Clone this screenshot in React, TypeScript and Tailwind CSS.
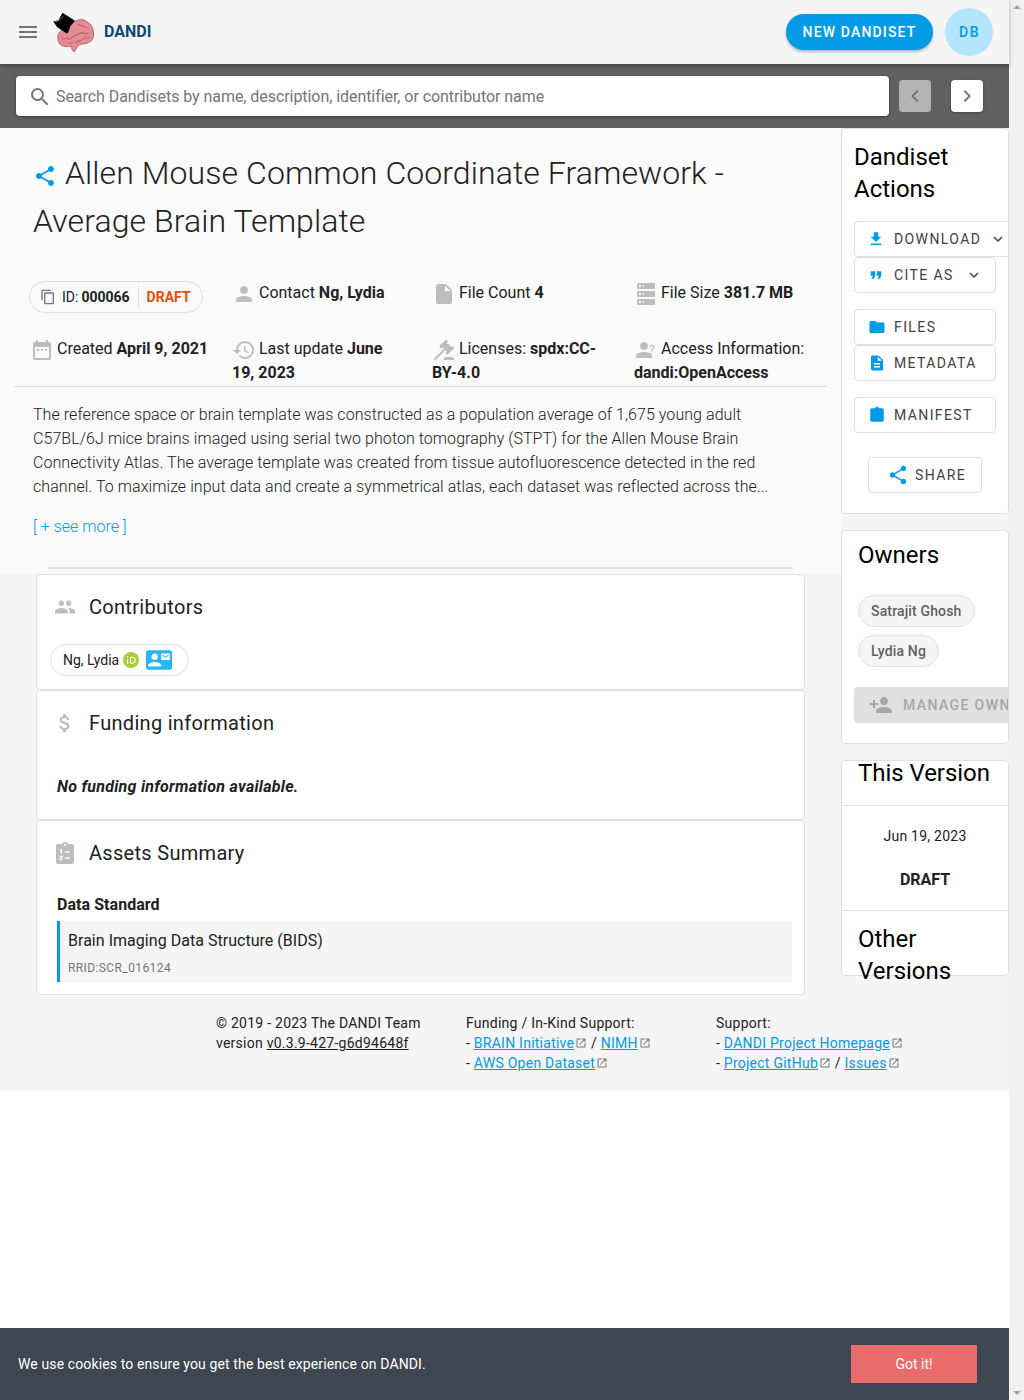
import React from "react";
import {
  MdMenu,
  MdSearch,
  MdChevronLeft,
  MdChevronRight,
  MdKeyboardArrowDown,
  MdFileDownload,
  MdFormatQuote,
  MdFolder,
  MdDescription,
  MdShare,
  MdPersonAdd,
  MdPerson,
  MdInsertDriveFile,
  MdDateRange,
  MdHistory,
  MdPeople,
  MdAttachMoney,
  MdContentCopy,
  MdContactMail,
  MdOpenInNew,
} from "react-icons/md";

const Logo = () => (
  <svg viewBox="50 10 50 45" width="50" height="45" className="shrink-0">
    {/* brain */}
    <path
      d="M72 24 C76 19 84 18 87 22 C92 24 94 30 93.5 35 C94 40 89 44 82 44 C78 45 76 48 74.500 52 C72 51 71.500 48 71 46 C64 48 58 45 58 39 C57 35 59 31 63 30 Z"
      fill="#e58b93"
      stroke="#a8565e"
      strokeWidth="0.8"
    />
    <path
      d="M62 39 C66 37 68 41 72 38 C74 34 78 36 80 33 C83 32 85 35 88 33 M75 43 C77 40 81 42 83 39 C85 37 88 39 90 37 M78 24 C81 27 84 25 87 28 M68 43 C70 42 71 44 73 43"
      fill="none"
      stroke="#a8565e"
      strokeWidth="0.9"
    />
    {/* top hat */}
    <polygon points="53.300,21.500 58.500,20 62.500,12.700 75,20.700 70.500,26 68,33 66.500,33.500 57,27" fill="#000" />
    <path d="M55 22 C58 21.500 61 19 63 16.500" fill="none" stroke="#ddd" strokeWidth="0.6" />
  </svg>
);

const AccessIcon = () => (
  <span className="relative inline-block w-[24px] h-[24px] -my-2 -mr-[1px]">
    <MdPerson size={24} className="text-[#bdbdbd] absolute left-[-2px] top-0" />
    <span className="absolute left-[15px] top-[2px] text-[12px] leading-[20px] text-[#bdbdbd]">?</span>
  </span>
);

const MdiIcon = ({ d, className = "" }: { d: string; className?: string }) => (
  <svg viewBox="0 0 24 24" width="24" height="24" className={className}>
    <path fill="currentColor" d={d} />
  </svg>
);

const SERVER =
  "M4,1H20A1,1 0 0,1 21,2V6A1,1 0 0,1 20,7H4A1,1 0 0,1 3,6V2A1,1 0 0,1 4,1M4,9H20A1,1 0 0,1 21,10V14A1,1 0 0,1 20,15H4A1,1 0 0,1 3,14V10A1,1 0 0,1 4,9M4,17H20A1,1 0 0,1 21,18V22A1,1 0 0,1 20,23H4A1,1 0 0,1 3,22V18A1,1 0 0,1 4,17M9,5H10V3H9V5M9,13H10V11H9V13M9,21H10V19H9V21M5,3V5H7V3H5M5,11V13H7V11H5M5,19V21H7V19H5Z";
const GAVEL =
  "M2.3,20.28L11.9,10.68L10.5,9.26L9.78,9.97C9.39,10.36 8.76,10.36 8.37,9.97L7.66,9.26C7.27,8.87 7.27,8.24 7.66,7.85L13.32,2.19C13.71,1.8 14.34,1.8 14.73,2.19L15.44,2.9C15.83,3.29 15.83,3.92 15.44,4.31L14.73,5L16.15,6.43C16.54,6.04 17.17,6.04 17.56,6.43C17.95,6.82 17.95,7.46 17.56,7.85L18.97,9.26L19.68,8.55C20.07,8.16 20.71,8.16 21.1,8.55L21.8,9.26C22.19,9.65 22.19,10.29 21.8,10.68L16.15,16.33C15.76,16.72 15.12,16.72 14.73,16.33L14.03,15.63C13.63,15.24 13.63,14.6 14.03,14.21L14.73,13.5L13.32,12.09L3.71,21.7C3.32,22.09 2.69,22.09 2.3,21.7C1.91,21.31 1.91,20.67 2.3,20.28M20,19A2,2 0 0,1 22,21V22H12V21A2,2 0 0,1 14,19H20Z";

const ClipboardSolid = () => (
  <svg viewBox="0 0 24 24" width="18" height="18" className="text-[#039be5]">
    <path
      fill="currentColor"
      d="M19,3H14.82C14.4,1.84 13.3,1 12,1C10.7,1 9.6,1.84 9.18,3H5A2,2 0 0,0 3,5V19A2,2 0 0,0 5,21H19A2,2 0 0,0 21,19V5A2,2 0 0,0 19,3Z"
    />
  </svg>
);

const ClipboardList = () => (
  <svg viewBox="0 0 24 24" width="24" height="24" className="text-[#bdbdbd]">
    <path
      fill="currentColor"
      d="M19 3h-4.2C14.4 1.8 13.3 1 12 1s-2.4.8-2.8 2H5c-1.1 0-2 .9-2 2v16c0 1.1.9 2 2 2h14c1.1 0 2-.9 2-2V5c0-1.1-.9-2-2-2zm-7 0c.6 0 1 .4 1 1s-.4 1-1 1-1-.4-1-1 .4-1 1-1z"
    />
    <path
      fill="none"
      stroke="#fafafa"
      strokeWidth="1.4"
      d="M7 9.500l1.300-.7v4M6.800 15.500h2.400l-2.300 3h2.600M12 11h5M12 17h5"
    />
  </svg>
);

const OrcidIcon = () => (
  <svg viewBox="0 0 16 16" width="16" height="16" className="shrink-0">
    <circle cx="8" cy="8" r="8" fill="#a6ce39" />
    <rect x="4" y="6.600" width="1.200" height="5.200" fill="#fff" />
    <circle cx="4.600" cy="4.700" r="0.800" fill="#fff" />
    <path
      d="M7 4.800h2.400c2 0 3.200 1.400 3.200 3.500s-1.300 3.500-3.200 3.500H7z M8.100 5.800v5h1.300c1.400 0 2.100-1.100 2.100-2.500s-.7-2.500-2.100-2.500z"
      fill="#fff"
      fillRule="evenodd"
    />
  </svg>
);

const Ext = () => <MdOpenInNew size={12} className="inline-block text-[#757575] ml-[1px] -my-1 align-[3px]" />;

const MetaText = ({ children, className = "pr-[8px]" }: { children: React.ReactNode; className?: string }) => (
  <p className={`pt-[1px] text-[16px] leading-[24px] text-[#212121] ${className}`}>{children}</p>
);

const icon = "inline-block -my-2 -mr-[1px] text-[#bdbdbd]";

const ActionButton = ({
  ico,
  label,
  caretClass,
  className = "",
}: {
  ico: React.ReactNode;
  label: string;
  caretClass?: string;
  className?: string;
}) => (
  <div
    className={`h-[36px] flex items-center border border-[#e0e0e0] rounded-[4px] bg-white text-[14px] tracking-[1.4px] text-[#424242] pl-[13px] ${className}`}
  >
    <span className="w-[26px] shrink-0 flex">{ico}</span>
    <span className="whitespace-nowrap">{label}</span>
    {caretClass && <MdKeyboardArrowDown size={18} className={`shrink-0 text-[#424242] ${caretClass}`} />}
  </div>
);

const SectionCard = ({
  ico,
  title,
  className,
  children,
}: {
  ico: React.ReactNode;
  title: string;
  className: string;
  children: React.ReactNode;
}) => (
  <section className={`bg-white border border-[#e0e0e0] rounded-[4px] ${className}`}>
    <div className="flex items-center h-[64px] pl-[16px]">
      <span className="w-[36px] shrink-0 flex">{ico}</span>
      <h2 className="text-[20px] leading-[32px] tracking-[0.3px] text-[#212121]">{title}</h2>
    </div>
    {children}
  </section>
);

export default function App() {
  return (
    <div className="flex h-[1400px] overflow-hidden bg-white [font-family:Roboto,sans-serif] relative">
      <div className="w-[1009px] shrink-0 flex flex-col">
        {/* App bar */}
        <header className="h-[64px] bg-[#f5f5f5] flex items-center pl-[16px] pr-[16px] relative z-10 shadow-[0_2px_4px_rgba(0,0,0,0.3)]">
          <MdMenu size={24} className="text-[#757575]" />
          <div className="ml-[10px] flex items-center">
            <Logo />
            <span className="ml-[4px] text-[16px] font-bold text-[#0b4a72]">DANDI</span>
          </div>
          <button className="ml-auto h-[36px] w-[147px] rounded-full bg-[#039be5] text-white text-[14px] font-medium tracking-[1.15px] shadow-[0_2px_3px_rgba(0,0,0,0.25)]">
            NEW DANDISET
          </button>
          <div className="ml-[12px] w-[48px] h-[48px] pl-[1px] rounded-full bg-[#b3e5fc] text-[#039be5] text-[14px] font-medium tracking-[0.1em] flex items-center justify-center">
            DB
          </div>
        </header>

        {/* Search bar */}
        <div className="h-[64px] bg-[#616161] flex items-center pl-[16px]">
          <div className="w-[873px] h-[40px] bg-white rounded-[4px] flex items-center pl-[12px] pt-[1px] shadow-[0_1px_3px_rgba(0,0,0,0.4)]">
            <MdSearch size={24} className="text-[#757575]" />
            <span className="ml-[4px] text-[16px] tracking-[-0.06px] text-[#757575]">
              Search Dandisets by name, description, identifier, or contributor name
            </span>
          </div>
          <div className="ml-[10px] w-[32px] h-[32px] rounded-[4px] bg-[#b4b4b4] flex items-center justify-center">
            <MdChevronLeft size={24} className="text-[#757575]" />
          </div>
          <div className="ml-[20px] w-[32px] h-[32px] rounded-[4px] bg-white flex items-center justify-center shadow-[0_1px_3px_rgba(0,0,0,0.3)]">
            <MdChevronRight size={24} className="text-[#757575]" />
          </div>
        </div>

        {/* Body */}
        <div className="flex bg-[#f5f5f5] h-[867px]">
          <div className="w-[841px] shrink-0 flex flex-col">
            <div className="h-[446px] bg-[#fafafa] rounded-t-[4px] flex flex-col">
              <h1 className="ml-[33px] mt-[21px] w-[760px] text-[32px] leading-[48px] font-light tracking-[0.08px] text-[#212121]">
                <MdShare size={24} className="inline-block -my-2 mr-[8px] text-[#039be5]" />
                Allen Mouse Common Coordinate Framework - Average Brain Template
              </h1>

              <div className="mx-[14px] mt-[35px] h-[107px] border-b border-[#e0e0e0] grid grid-cols-[218px_200px_202px_1fr] grid-rows-[56px_auto]">
                <div className="pl-[15px] pt-[1px]">
                  <div className="w-[174px] h-[32px] border border-[#e0e0e0] rounded-full flex items-center pl-[10px] text-[14px] text-[#212121]">
                    <MdContentCopy size={16} className="text-[#757575] mr-[6px]" />
                    <span className="mr-[3px]">ID:</span>
                    <b className="font-bold">000066</b>
                    <span className="ml-[8px] pl-[8px] border-l border-[#e0e0e0] h-[22px] leading-[22px] font-bold text-[#e65100]">DRAFT</span>
                  </div>
                </div>
                <MetaText>
                  <MdPerson size={24} className={icon} /> Contact <b>Ng, Lydia</b>
                </MetaText>
                <MetaText>
                  <MdInsertDriveFile size={24} className={icon} /> File Count <b>4</b>
                </MetaText>
                <MetaText>
                  <MdiIcon d={SERVER} className={icon} /> File Size <b>381.7 MB</b>
                </MetaText>
                <div className="pl-[16px]">
                  <MetaText className="pr-0">
                    <MdDateRange size={24} className={icon} /> Created <b>April 9, 2021</b>
                  </MetaText>
                </div>
                <MetaText className="pr-[30px]">
                  <MdHistory size={24} className={icon} /> Last update <b>June 19, 2023</b>
                </MetaText>
                <MetaText className="pr-[24px]">
                  <MdiIcon d={GAVEL} className={icon} /> Licenses: <b>spdx:CC-BY-4.0</b>
                </MetaText>
                <MetaText className="pr-0">
                  <AccessIcon /> Access Information: <b>dandi:OpenAccess</b>
                </MetaText>
              </div>

              <p className="ml-[33px] mt-[16px] w-[750px] text-[16px] leading-[24px] font-light tracking-[0.06px] text-[#212121]">
                The reference space or brain template was constructed as a population average of 1,675 young adult
                C57BL/6J mice brains imaged using serial two photon tomography (STPT) for the Allen Mouse Brain
                Connectivity Atlas. The average template was created from tissue autofluorescence detected in the red
                channel. To maximize input data and create a symmetrical atlas, each dataset was reflected across the...
              </p>
              <a className="ml-[33px] mt-[16px] text-[16px] leading-[24px] font-light text-[#039be5]">[ + see more ]</a>
              <div className="ml-[48px] mt-[28px] w-[745px] h-[2px] bg-[#e0e0e0]" />
            </div>

            <div className="ml-[36px] w-[769px] flex flex-col">
              <SectionCard
                ico={<MdPeople size={22} className="text-[#bdbdbd] ml-[1px]" />}
                title="Contributors"
                className="h-[116px]"
              >
                <div className="ml-[13px] mt-[5px] w-[139px] h-[32px] border border-[#e0e0e0] rounded-full flex items-center pl-[12px] text-[14px] text-[#212121]">
                  Ng, Lydia
                  <span className="ml-[4px]">
                    <OrcidIcon />
                  </span>
                  <MdContactMail size={26} className="ml-[7px] text-[#29b6f6]" />
                </div>
              </SectionCard>
              <SectionCard
                ico={<MdAttachMoney size={24} className="text-[#bdbdbd]" />}
                title="Funding information"
                className="h-[130px]"
              >
                <p className="ml-[20px] mt-[20px] text-[16px] leading-[24px] font-bold italic tracking-[0.27px] text-[#212121]">
                  No funding information available.
                </p>
              </SectionCard>
              <SectionCard ico={<ClipboardList />} title="Assets Summary" className="h-[175px]">
                <p className="ml-[20px] mt-[8px] text-[16px] leading-[24px] font-bold tracking-[0.05px] text-[#212121]">Data Standard</p>
                <div className="ml-[20px] mt-[4px] w-[735px] h-[61px] bg-[#f5f5f5] border-l-[3px] border-[#039be5] pl-[8px] pt-[8px]">
                  <p className="text-[16px] leading-[24px] tracking-[0.03px] text-[#212121]">Brain Imaging Data Structure (BIDS)</p>
                  <p className="mt-[5px] text-[12px] leading-[20px] tracking-[0.0333em] text-[#757575]">RRID:SCR_016124</p>
                </div>
              </SectionCard>
            </div>
          </div>

          {/* Right column */}
          <aside className="w-[168px] shrink-0 flex flex-col gap-[16px]">
            <section className="h-[386px] bg-white border border-[#e0e0e0] rounded-[4px] overflow-hidden pl-[12px]">
              <h2 className="mt-[12px] text-[24px] leading-[32px] text-black w-[130px]">Dandiset Actions</h2>
              <ActionButton
                className="mt-[16px] w-[160px]"
                ico={<MdFileDownload size={18} className="text-[#039be5] -ml-[1px]" />}
                label="DOWNLOAD"
                caretClass="ml-[8px]"
              />
              <ActionButton
                className="w-[142px]"
                ico={<MdFormatQuote size={18} className="text-[#039be5] -ml-[1px]" />}
                label="CITE AS"
                caretClass="ml-[11px]"
              />
              <ActionButton
                className="mt-[16px] w-[142px]"
                ico={<MdFolder size={18} className="text-[#039be5]" />}
                label="FILES"
              />
              <ActionButton
                className="w-[142px]"
                ico={<MdDescription size={18} className="text-[#039be5]" />}
                label="METADATA"
              />
              <ActionButton className="mt-[16px] w-[142px]" ico={<ClipboardSolid />} label="MANIFEST" />
              <div className="mt-[24px] ml-[14px] w-[114px] h-[36px] border border-[#e0e0e0] rounded-[4px] flex items-center pl-[18px] text-[14px] tracking-[1.4px] text-[#424242]">
                <MdShare size={22} className="text-[#039be5] mr-[6px] shrink-0" />
                SHARE
              </div>
            </section>

            <section className="h-[214px] bg-white border border-[#e0e0e0] rounded-[4px] overflow-hidden">
              <h2 className="ml-[16px] mt-[8px] text-[24px] leading-[32px] text-black">Owners</h2>
              <div className="ml-[16px] mt-[24px] flex flex-col items-start gap-[8px]">
                <span className="h-[32px] px-[12px] flex items-center rounded-full bg-[#f5f5f5] border border-[#e0e0e0] text-[14px] font-medium tracking-[0.15px] text-[#616161]">
                  Satrajit Ghosh
                </span>
                <span className="h-[32px] px-[12px] flex items-center rounded-full bg-[#f5f5f5] border border-[#e0e0e0] text-[14px] font-medium tracking-[0.15px] text-[#616161]">
                  Lydia Ng
                </span>
              </div>
              <div className="ml-[12px] mt-[20px] w-[200px] h-[36px] bg-[#e0e0e0] rounded-[4px] flex items-center pl-[15px] text-[14px] font-medium tracking-[1.4px] text-[#a6a6a6] whitespace-nowrap">
                <MdPersonAdd size={24} className="mr-[10px] shrink-0" />
                MANAGE OWNERS
              </div>
            </section>

            <section className="h-[216px] bg-white border border-[#e0e0e0] rounded-[4px]">
              <h2 className="ml-[16px] h-[44px] text-[24px] leading-[24px] tracking-[-0.05px] text-black">This Version</h2>
              <div className="border-t border-[#e0e0e0] h-[105px] flex flex-col items-center">
                <p className="mt-[20px] text-[14px] leading-[20px] tracking-[0.25px] text-[#212121]">Jun 19, 2023</p>
                <p className="mt-[24px] text-[16px] leading-[20px] font-bold text-[#212121]">DRAFT</p>
              </div>
              <h2 className="border-t border-[#e0e0e0] pl-[16px] pr-[36px] pt-[12px] text-[24px] leading-[32px] text-black">
                Other Versions
              </h2>
            </section>
          </aside>
        </div>

        {/* Footer */}
        <footer className="h-[96px] bg-[#f5f5f5] pl-[216px] pt-[18px] grid grid-cols-[250px_250px_1fr] text-[14px] leading-[20px] tracking-[0.25px] text-[#212121]">
          <div>
            <p>© 2019 - 2023 The DANDI Team</p>
            <p>
              version <a className="underline">v0.3.9-427-g6d94648f</a>
            </p>
          </div>
          <div>
            <p>Funding / In-Kind Support:</p>
            <p>
              - <a className="underline text-[#039be5]">BRAIN Initiative</a>
              <Ext /> / <a className="underline text-[#039be5]">NIMH</a>
              <Ext />
            </p>
            <p>
              - <a className="underline text-[#039be5]">AWS Open Dataset</a>
              <Ext />
            </p>
          </div>
          <div>
            <p>Support:</p>
            <p>
              - <a className="underline text-[#039be5]">DANDI Project Homepage</a>
              <Ext />
            </p>
            <p>
              - <a className="underline text-[#039be5]">Project GitHub</a>
              <Ext /> / <a className="underline text-[#039be5]">Issues</a>
              <Ext />
            </p>
          </div>
        </footer>
      </div>

      {/* Scrollbar */}
      <div className="w-[15px] bg-[#f1f1f1] flex flex-col items-center justify-between py-[5px]">
        <div className="w-0 h-0 border-l-[4px] border-r-[4px] border-b-[4px] border-l-transparent border-r-transparent border-b-[#a3a3a3]" />
        <div className="w-0 h-0 border-l-[4px] border-r-[4px] border-t-[4px] border-l-transparent border-r-transparent border-t-[#a3a3a3]" />
      </div>

      {/* Cookie banner */}
      <div className="absolute left-0 bottom-0 w-[1009px] h-[72px] bg-[#3e4651] flex items-center pl-[18px] text-[14px] tracking-[0.12px] text-white z-20">
        We use cookies to ensure you get the best experience on DANDI.
        <button className="absolute left-[851px] top-[17px] w-[126px] h-[38px] bg-[#e96b6b] text-white text-[14px] tracking-normal">
          Got it!
        </button>
      </div>
    </div>
  );
}
